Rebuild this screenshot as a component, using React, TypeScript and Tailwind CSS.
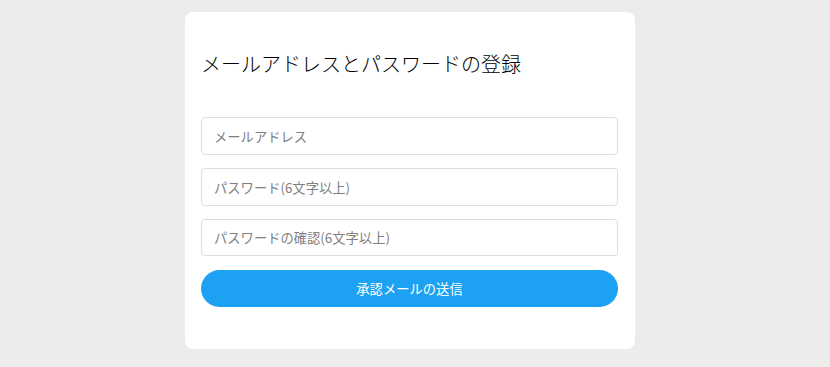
export default function App() {
  return (
    <main
      className="min-h-[367px] w-full bg-[#ececec] pt-[12px] pb-[18px] pr-[10px]"
      style={{ fontFamily: '"Noto Sans CJK JP", "Noto Sans", sans-serif' }}
    >
      <div className="mx-auto w-[450px] rounded-lg bg-white pl-4 pr-[17px] pt-[37px] pb-[42px]">
        <h1 className="text-[20px] leading-[30px] font-light text-black">
          メールアドレスとパスワードの登録
        </h1>

        <form className="mt-[38px] flex flex-col gap-[13px]" onSubmit={(e) => e.preventDefault()}>
          <input
            type="email"
            placeholder="メールアドレス"
            className="h-[38px] w-full rounded border border-[#dddddd] px-[12px] text-[13.3px] text-[#333] placeholder:text-[#808080] outline-none"
          />
          <input
            type="password"
            placeholder="パスワード(6文字以上)"
            className="h-[38px] w-full rounded border border-[#dddddd] px-[12px] text-[13.3px] text-[#333] placeholder:text-[#808080] outline-none"
          />
          <input
            type="password"
            placeholder="パスワードの確認(6文字以上)"
            className="h-[37px] w-full rounded border border-[#dddddd] px-[12px] text-[13.3px] text-[#333] placeholder:text-[#808080] outline-none"
          />
          <button
            type="submit"
            className="mt-px h-[37px] w-full rounded-full bg-[#1da1f2] text-[13.3px] text-white"
          >
            承認メールの送信
          </button>
        </form>
      </div>
    </main>
  );
}
